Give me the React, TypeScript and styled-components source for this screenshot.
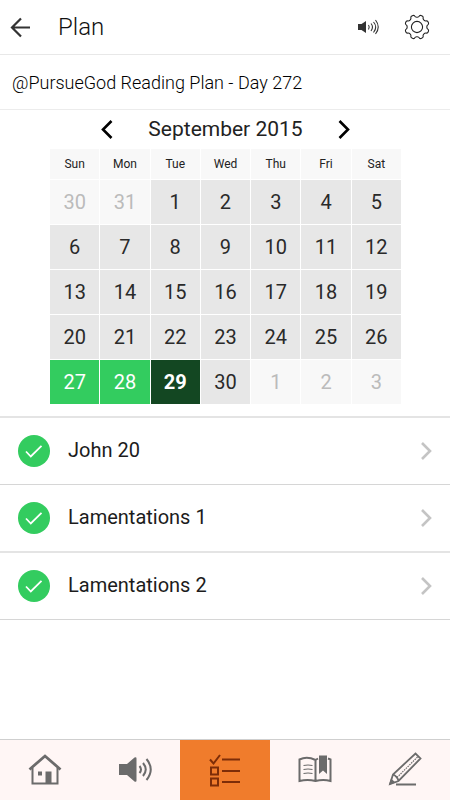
import React from "react";
import styled, { createGlobalStyle, css } from "styled-components";

const GlobalStyle = createGlobalStyle`
  *, *::before, *::after { box-sizing: border-box; }
  body { margin: 0; background: #fff; color: #111; font-family: Roboto, "Liberation Sans", sans-serif; }
  button { font: inherit; color: inherit; border: 0; padding: 0; background: none; cursor: pointer; }
`;

const Page = styled.div`
  display: flex;
  flex-direction: column;
  min-height: 100vh;
`;

const Header = styled.header`
  display: flex;
  align-items: center;
  height: 55px;
  padding: 0 21px 0 8px;
  border-bottom: 1px solid #e8e8e8;
`;

const IconButton = styled.button`
  display: grid;
  place-items: center;
  flex: none;
  width: 24px;
  height: 32px;
`;

const Title = styled.h1`
  flex: 1;
  margin: 0 0 0 26px;
  font-size: 24px;
  font-weight: 300;
  line-height: 32px;
`;

const HeaderActions = styled.div`
  display: flex;
  gap: 25px;
`;

const PlanName = styled.h2`
  display: flex;
  align-items: center;
  height: 55px;
  margin: 0;
  padding: 0 12px;
  border-bottom: 1px solid #ececec;
  color: #000;
  font-size: 18px;
  font-weight: 300;
`;

const Calendar = styled.section`
  padding: 0 48px 11px 49px;
`;

const MonthBar = styled.div`
  display: flex;
  align-items: center;
  justify-content: center;
  gap: 29px;
  height: 38px;
  color: #000;
`;

const Month = styled.h3`
  margin: 0;
  color: #222;
  font-size: 21px;
  font-weight: 400;
  line-height: 32px;
`;

const Days = styled.table`
  width: 100%;
  table-layout: fixed;
  border-collapse: separate;
  border-spacing: 1px;
`;

const Weekday = styled.th`
  height: 30px;
  padding: 0;
  background: #f8f8f8;
  color: #222;
  font-size: 12px;
  font-weight: 400;
`;

type DayState = "outside" | "plain" | "done" | "today";

const dayStyles = {
  outside: css`background: #f8f8f8; color: #bbb;`,
  plain: css`background: #e7e7e7; color: #2a2a2a;`,
  done: css`background: #33cc5f; color: #fff;`,
  today: css`background: #134722; color: #fff; font-weight: 700;`,
};

const DayCell = styled.td<{ $state: DayState }>`
  height: 44px;
  padding: 0;
  font-size: 20px;
  ${({ $state }) => dayStyles[$state]}
`;

const DayButton = styled.button`
  display: block;
  width: 100%;
  height: 44px;
`;

const Readings = styled.ul`
  margin: 0;
  padding: 0;
  list-style: none;
  border-top: 2px solid #e4e4e4;
`;

const Reading = styled.li`
  border-bottom: 1px solid #d6d6d6;

  &:nth-child(2) { border-bottom: 2px solid #e4e4e4; }
`;

const ReadingLink = styled.a`
  display: flex;
  align-items: center;
  height: 66px;
  padding: 0 18px;
  color: #1c1c1c;
  text-decoration: none;
`;

const ReadingName = styled.span`
  flex: 1;
  padding: 0 0 3px 18px;
  font-size: 20px;
  line-height: 24px;
`;

const TabBar = styled.nav`
  display: grid;
  grid-template-columns: repeat(5, 1fr);
  height: 61px;
  margin-top: auto;
  border-top: 1px solid #cfcfcf;
  background: #fff6f5;
`;

const Tab = styled.a<{ $active?: boolean }>`
  display: grid;
  place-items: center;
  color: ${({ $active }) => ($active ? "#7d2d08" : "#6b6b6b")};
  background: ${({ $active }) => ($active ? "#f07c2c" : "transparent")};
`;

const Glyph = styled.svg`
  display: block;
  overflow: visible;
  fill: none;
  stroke: currentColor;
`;

const BackIcon = () => (
  <Glyph width="24" height="24" viewBox="0 0 24 24" strokeWidth="2.200" color="#333">
    <path d="M22 12.500H4M13 3.500l-9 9 9 9" />
  </Glyph>
);

const SmallSpeakerIcon = () => (
  <Glyph width="24" height="24" viewBox="0 0 24 24" color="#333">
    <path d="M2 9h3.500L10 6v12l-4.500-3H2z" fill="currentColor" stroke="none" />
    <path d="M12.500 10q1.500 2 0 4.500M15 8.500q3 3.500 0 7.500M17.500 7q4.500 5 0 10.500M19.500 5q5.500 7 0 14" strokeWidth="1.100" />
  </Glyph>
);

const GEAR_TEETH = 8;

const gearOutline = (() => {
  const at = (radius: number, degrees: number) => {
    const angle = (degrees * Math.PI) / 180;
    return `${(12 + radius * Math.sin(angle)).toFixed(2)} ${(12 - radius * Math.cos(angle)).toFixed(2)}`;
  };
  const parts = [`M${at(9.8, 0)}`];
  for (let i = 0; i < GEAR_TEETH; i += 1) {
    const a = i * 45;
    parts.push(
      `C${at(9.8, a + 7)} ${at(10.4, a + 11)} ${at(11.6, a + 13)}`,
      `Q${at(12.3, a + 15)} ${at(12.2, a + 22.5)}`,
      `Q${at(12.3, a + 30)} ${at(11.6, a + 32)}`,
      `C${at(10.4, a + 34)} ${at(9.8, a + 38)} ${at(9.8, a + 45)}`,
    );
  }
  return `${parts.join("")}Z`;
})();

const GearIcon = () => (
  <Glyph width="24" height="24" viewBox="0 0 24 24" strokeWidth="1.100" color="#222">
    <path d={gearOutline} />
    <circle cx="12" cy="12" r="5.600" />
  </Glyph>
);

const MonthArrow = ({ next }: { next?: boolean }) => (
  <Glyph width="12" height="20" viewBox="0 0 12 20" strokeWidth="2.600">
    <path d={next ? "M1.500 2L10 10.500 1.500 19" : "M10.500 2L2 10.500l8.500 8.500"} />
  </Glyph>
);

const CheckBadge = () => (
  <svg width="32" height="32" viewBox="0 0 32 32" role="img" aria-label="Completed">
    <circle cx="16" cy="16" r="16" fill="#33cc5f" />
    <path d="M8 16.500l4.800 5L23.500 10.800" fill="none" stroke="#fff" strokeWidth="1.800" />
  </svg>
);

const RowArrow = () => (
  <Glyph width="12" height="20" viewBox="0 0 12 20" strokeWidth="2.600" color="#c4c4c4">
    <path d="M2 2l8 8-8 8" />
  </Glyph>
);

const HomeIcon = () => (
  <Glyph width="36" height="36" viewBox="0 0 36 36" strokeWidth="2">
    <path d="M5.500 16v15.500h25V16" />
    <path d="M2.500 17.500L18 4l15.500 13.500" strokeWidth="2.800" />
    <path d="M18.500 19.500h6v12h-6zM11 19.500h4v4h-4z" fill="currentColor" stroke="none" />
  </Glyph>
);

const SpeakerIcon = () => (
  <Glyph width="36" height="36" viewBox="0 0 36 36" strokeWidth="2">
    <path d="M2 12h8l7.500-6.500q2-1 2 1v22q0 2-2 1L10 23H2z" fill="currentColor" stroke="none" />
    <path d="M22.500 14q3 3.500 0 7M26 11q5.500 6.500 0 13M29.500 7q8.500 10.500 0 21" />
  </Glyph>
);

const ChecklistIcon = () => (
  <Glyph width="36" height="36" viewBox="0 0 36 36" strokeWidth="2">
    <path d="M3 7.500l3.500 4 6.500-8.500M15 7.500h18M15 19h18M15 30h18M4 15.500h7v7H4zM4 26.500h7v7H4z" />
  </Glyph>
);

const BookIcon = () => (
  <Glyph width="36" height="36" viewBox="0 0 36 36" strokeWidth="2">
    <path d="M18.500 29V8Q10 4 2.500 7.500V29q8-2 16 0 8-2 15 0V7.500L31 6.500M18.500 8l2.500-1.500" />
    <path d="M6.500 13.500q4.500-1 9 0M6.500 17.500q4.500-1 9 0M6.500 21.500q4.500-1 9 0" strokeWidth="1.200" />
    <path d="M22 3.500h8v18.500l-4-3.500-4 3.500z" fill="currentColor" stroke="none" />
  </Glyph>
);

const PencilIcon = () => (
  <Glyph width="36" height="36" viewBox="0 0 36 36" strokeWidth="1.800">
    <path d="M3 32l3-9.500L28.500 1.500l5 5L11.500 29zM6 22.500q4.500 2 5.500 6.500M9 32.500h20" />
    <path d="M10 25.500L30.500 5" strokeWidth="1.200" strokeDasharray="1.500 1" />
    <path d="M2 33l2-6.500 4.500 4z" fill="currentColor" stroke="none" />
  </Glyph>
);

const weekdays = ["Sun", "Mon", "Tue", "Wed", "Thu", "Fri", "Sat"];

const weeks = [
  [30, 31, 1, 2, 3, 4, 5],
  [6, 7, 8, 9, 10, 11, 12],
  [13, 14, 15, 16, 17, 18, 19],
  [20, 21, 22, 23, 24, 25, 26],
  [27, 28, 29, 30, 1, 2, 3],
];

const readings = ["John 20", "Lamentations 1", "Lamentations 2"];

const tabs = [
  { label: "Home", Icon: HomeIcon },
  { label: "Listen", Icon: SpeakerIcon },
  { label: "Plan", Icon: ChecklistIcon, active: true },
  { label: "Read", Icon: BookIcon },
  { label: "Notes", Icon: PencilIcon },
];

function dayState(week: number, day: number): DayState {
  if ((week === 0 && day > 7) || (week === 4 && day < 7)) return "outside";
  if (day === 29) return "today";
  if (day === 27 || day === 28) return "done";
  return "plain";
}

export default function App() {
  return (
    <Page>
      <GlobalStyle />
      <Header>
        <IconButton aria-label="Back"><BackIcon /></IconButton>
        <Title>Plan</Title>
        <HeaderActions>
          <IconButton aria-label="Listen"><SmallSpeakerIcon /></IconButton>
          <IconButton aria-label="Settings"><GearIcon /></IconButton>
        </HeaderActions>
      </Header>
      <main>
        <PlanName>@PursueGod Reading Plan - Day 272</PlanName>
        <Calendar>
          <MonthBar>
            <IconButton aria-label="Previous month"><MonthArrow /></IconButton>
            <Month>September 2015</Month>
            <IconButton aria-label="Next month"><MonthArrow next /></IconButton>
          </MonthBar>
          <Days>
            <thead>
              <tr>
                {weekdays.map((name) => <Weekday key={name} scope="col">{name}</Weekday>)}
              </tr>
            </thead>
            <tbody>
              {weeks.map((week, index) => (
                <tr key={index}>
                  {week.map((day) => (
                    <DayCell key={day} $state={dayState(index, day)}>
                      <DayButton>{day}</DayButton>
                    </DayCell>
                  ))}
                </tr>
              ))}
            </tbody>
          </Days>
        </Calendar>
        <Readings>
          {readings.map((name) => (
            <Reading key={name}>
              <ReadingLink href="#">
                <CheckBadge />
                <ReadingName>{name}</ReadingName>
                <RowArrow />
              </ReadingLink>
            </Reading>
          ))}
        </Readings>
      </main>
      <TabBar>
        {tabs.map(({ label, Icon, active }) => (
          <Tab key={label} href="#" aria-label={label} $active={active}><Icon /></Tab>
        ))}
      </TabBar>
    </Page>
  );
}
